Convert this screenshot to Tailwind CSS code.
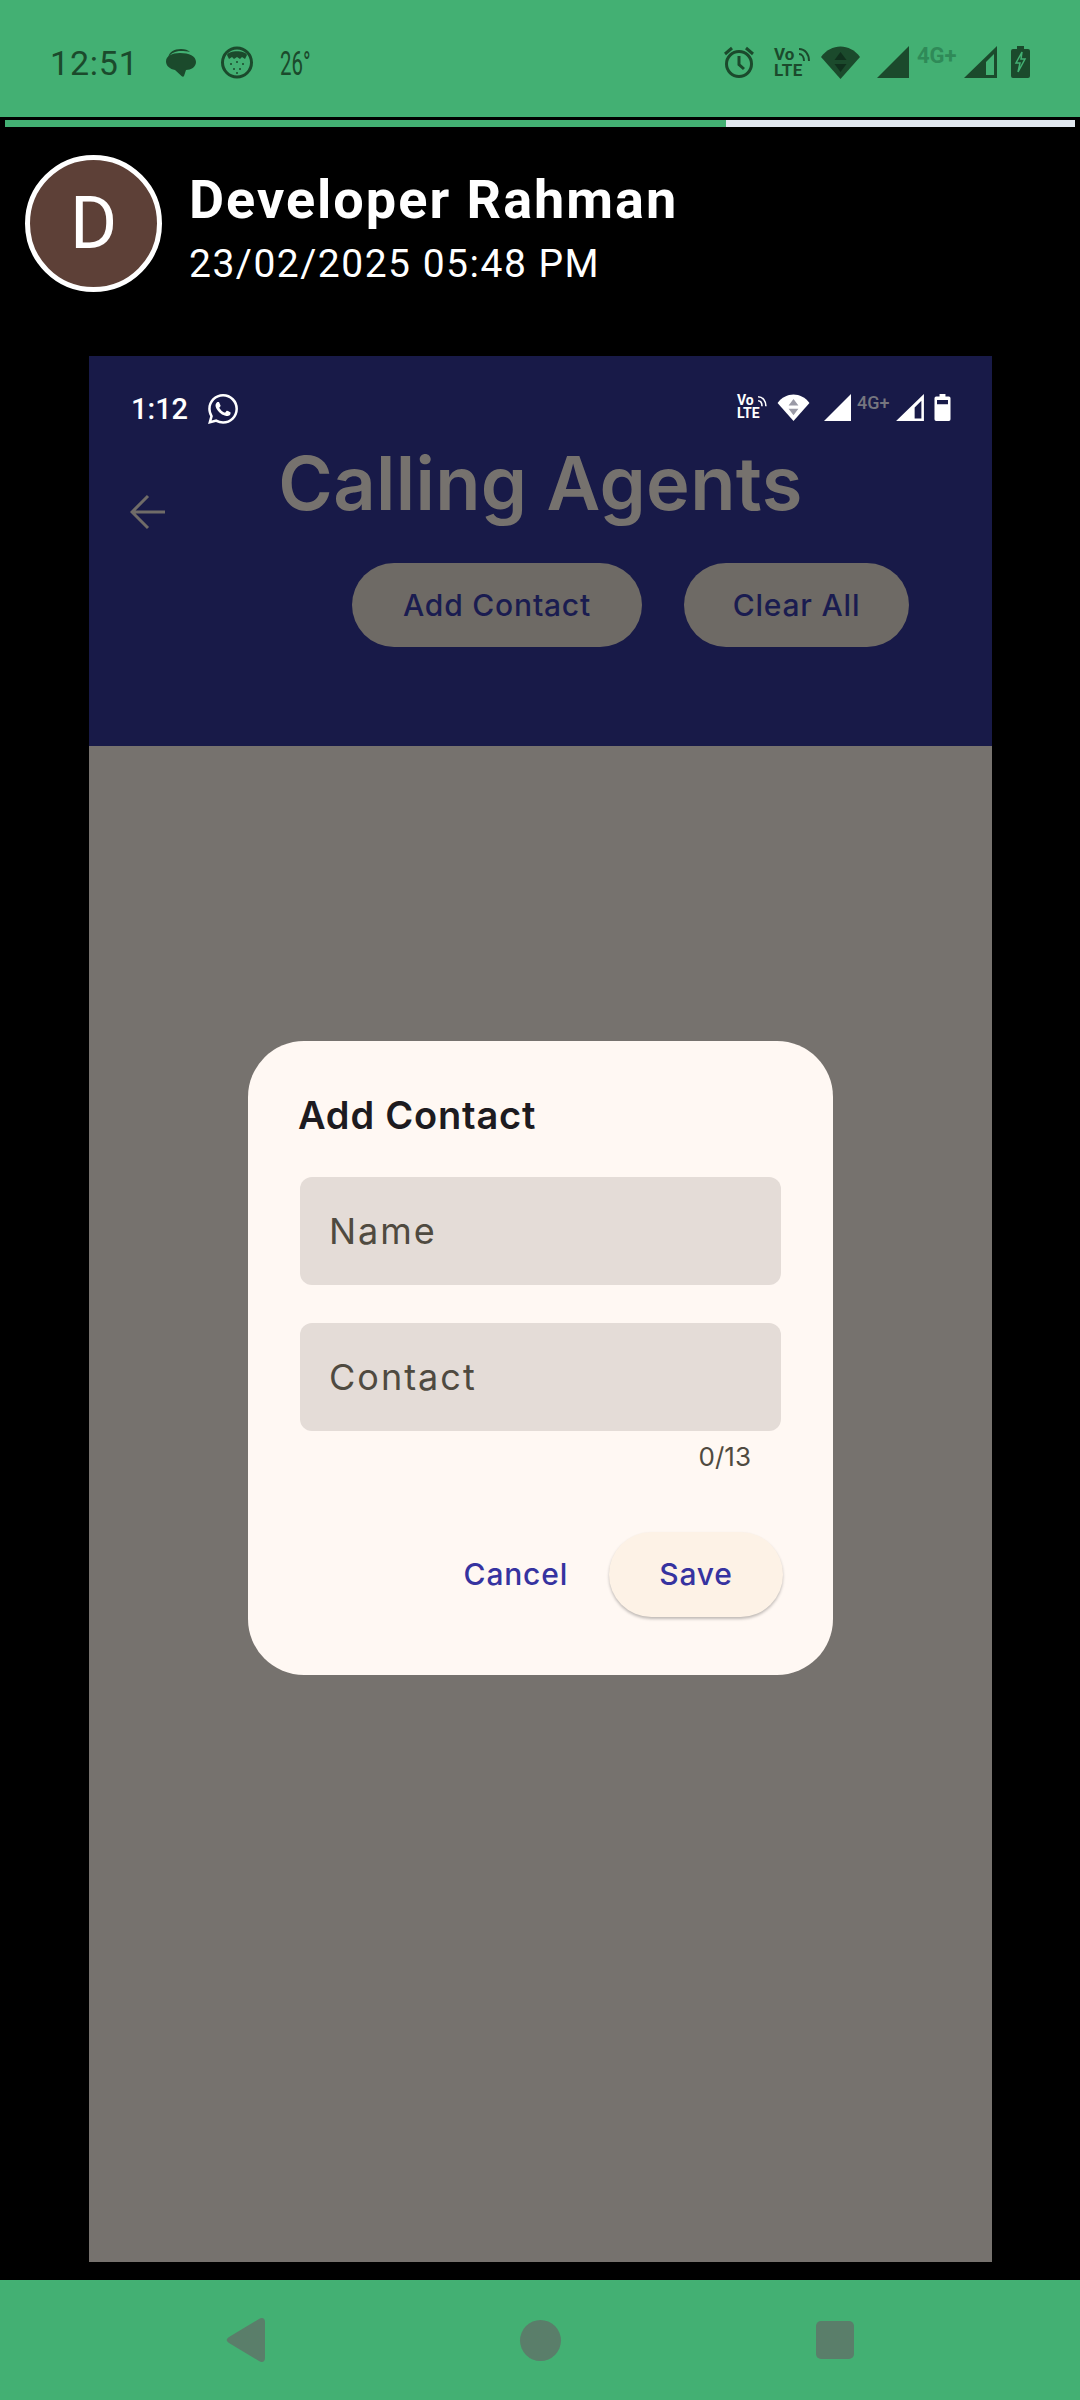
<!DOCTYPE html>
<html lang="en">
  <head>
    <meta charset="UTF-8" />
    <meta name="viewport" content="width=device-width, initial-scale=1.0" />
    <title>Calling Agents status</title>
    <script src="https://cdn.jsdelivr.net/npm/@tailwindcss/browser@4"></script>
  </head>
  <body class="w-[1080px] h-[2400px] overflow-hidden bg-black flex flex-col font-['Roboto',sans-serif]">
    <!-- phone status bar -->
    <div class="h-[117px] shrink-0 bg-[#43b073] flex items-start text-[#1b4a2c]">
      <span class="ml-[50px] mt-[41px] w-[84px] text-[34px] leading-[44px] tracking-[0.8px]">12:51</span>
      <svg class="ml-[31px] mt-[48px] w-[32px] h-[30px]" viewBox="0 0 32 30" fill="#1b4a2c">
        <path d="M3 10C4 4 9 1 16 1c4 0 7 1 9 3-3-1-6-1-9-1C10 3 6 5 3 10z" />
        <path d="M15 5c9 0 16 3 16 9 0 5-5 8-10 8l-2 6c-.5 1-1.500 1-2.500 0L10 22C5 21 1 18 1 13.500 1 8 7 5 15 5z" />
      </svg>
      <svg class="ml-[24px] mt-[46px] w-[32px] h-[33px]" viewBox="0 0 32 33">
        <circle cx="16" cy="16.500" r="14.500" fill="none" stroke="#1b4a2c" stroke-width="3" />
        <path d="M6 9c2-5 18-5 20 0l-2 4-3-2-2 2-3-2-3 2-2-2-3 2z" fill="#1b4a2c" />
        <g fill="#1b4a2c">
          <circle cx="10" cy="18" r="1" /><circle cx="16" cy="16" r="1" /><circle cx="22" cy="18" r="1" />
          <circle cx="13" cy="23" r="1" /><circle cx="19" cy="23" r="1" /><circle cx="16" cy="27" r="1" />
        </g>
      </svg>
      <span class="ml-[27px] mt-[44px] w-[36px] text-[34px] leading-[38px] scale-x-60 origin-left whitespace-nowrap">26°</span>
      <div class="ml-auto mr-[50px] mt-[46px] flex items-start">
        <svg class="w-[32px] h-[32px]" viewBox="0 0 32 32" fill="none" stroke="#1b4a2c" stroke-width="3">
          <circle cx="16" cy="18" r="12.500" />
          <path d="M16 10v8.500l5 4.500M2 8l7-6M30 8l-7-6" />
        </svg>
        <div class="ml-[19px] w-[36px] h-[32px] relative text-[#1b4a2c]">
          <span class="block text-[17px] leading-[16px] font-bold">Vo</span>
          <span class="block text-[17px] leading-[16px] font-bold tracking-[0.5px]">LTE</span>
          <svg class="absolute right-0 top-[2px] w-[12px] h-[14px]" viewBox="0 0 12 14" fill="none" stroke="#1b4a2c" stroke-width="2">
            <path d="M1 1c6 0 10 5 10 12M1 6c3 0 5 3 5 7" />
          </svg>
        </div>
        <svg class="ml-[11px] w-[39px] h-[33px]" viewBox="0 0 39 33">
          <path d="M0 11C10 -3 29 -3 39 11L19.500 33z" fill="#1b4a2c" />
          <path d="M19.500 6l-6 8h12zM13.500 18h12l-6 8z" fill="#10301d" />
        </svg>
        <svg class="ml-[17px] w-[32px] h-[32px]" viewBox="0 0 32 32"><path d="M32 0v32H0z" fill="#1b4a2c" /></svg>
        <span class="ml-[8px] w-[44px] text-[22px] leading-[20px] font-bold text-[#2f8a58]">4G+</span>
        <svg class="ml-[3px] w-[33px] h-[32px]" viewBox="0 0 33 32"><path d="M33 0v32H0zM30 8l-8 8v13h8z" fill="#1b4a2c" fill-rule="evenodd" /></svg>
        <svg class="ml-[14px] w-[19px] h-[32px]" viewBox="0 0 19 32">
          <path d="M6 0h7v3h4q2 0 2 2v25q0 2-2 2H2q-2 0-2-2V5q0-2 2-2h4z" fill="#1b4a2c" />
          <path d="M11 6L5 17h4l-2 9 7-13h-4z" fill="none" stroke="#43b073" stroke-width="1.500" />
        </svg>
      </div>
    </div>

    <!-- story progress -->
    <div class="mt-[3px] mx-[5px] h-[7px] shrink-0 flex">
      <div class="w-[721px] bg-[#43b073]"></div>
      <div class="flex-1 bg-[#e2e8f0]"></div>
    </div>

    <!-- author row -->
    <div class="mt-[28px] ml-[25px] h-[137px] shrink-0 flex items-center text-white">
      <div class="w-[137px] h-[137px] rounded-full border-[5px] border-white bg-[#5d4037] flex items-center justify-center text-[72px]">D</div>
      <div class="ml-[27px] pt-[15px] self-start flex flex-col">
        <span class="text-[54px] leading-[60px] font-bold tracking-[2px]">Developer Rahman</span>
        <span class="text-[39px] leading-[68px] tracking-[1.500px]">23/02/2025 05:48 PM</span>
      </div>
    </div>

    <!-- posted screenshot -->
    <div class="mt-[64px] ml-[89px] mr-[88px] h-[1906px] shrink-0 flex flex-col bg-[#76726e]">
      <div class="h-[390px] shrink-0 bg-[#181a48]">
        <div class="h-[82px] pt-[38px] pl-[42px] pr-[41px] flex items-start text-white">
          <span class="text-[29px] leading-[30px] font-medium">1:12</span>
          <svg class="ml-[20px] w-[30px] h-[30px]" viewBox="0 0 24 24" fill="#ffffff">
            <path d="M17.472 14.382c-.297-.149-1.758-.867-2.03-.967-.273-.099-.471-.148-.67.15-.197.297-.767.966-.94 1.164-.173.199-.347.223-.644.075-.297-.15-1.255-.463-2.39-1.475-.883-.788-1.48-1.761-1.653-2.059-.173-.297-.018-.458.13-.606.134-.133.298-.347.446-.52.149-.174.198-.298.298-.497.099-.198.05-.371-.025-.52-.075-.149-.669-1.612-.916-2.207-.242-.579-.487-.5-.669-.51-.173-.008-.371-.01-.57-.01-.198 0-.52.074-.792.372-.272.297-1.04 1.016-1.04 2.479 0 1.462 1.065 2.875 1.213 3.074.149.198 2.096 3.2 5.077 4.487.709.306 1.262.489 1.694.625.712.227 1.36.195 1.871.118.571-.085 1.758-.719 2.006-1.413.248-.694.248-1.289.173-1.413-.074-.124-.272-.198-.57-.347m-5.421 7.403h-.004a9.87 9.87 0 01-5.031-1.378l-.361-.214-3.741.982.998-3.648-.235-.374a9.86 9.86 0 01-1.51-5.26c.001-5.45 4.436-9.884 9.888-9.884 2.64 0 5.122 1.03 6.988 2.898a9.825 9.825 0 012.893 6.994c-.003 5.45-4.437 9.884-9.885 9.884m8.413-18.297A11.815 11.815 0 0012.05 0C5.495 0 .16 5.335.157 11.892c0 2.096.547 4.142 1.588 5.945L.057 24l6.305-1.654a11.882 11.882 0 005.683 1.448h.005c6.554 0 11.89-5.335 11.893-11.893a11.821 11.821 0 00-3.48-8.413z" />
          </svg>
          <div class="ml-auto flex items-start">
            <div class="w-[30px] h-[27px] relative">
              <span class="block text-[14px] leading-[13px] font-bold">Vo</span>
              <span class="block text-[14px] leading-[13px] font-bold">LTE</span>
              <svg class="absolute right-0 top-[2px] w-[10px] h-[11px]" viewBox="0 0 12 14" fill="none" stroke="#ffffff" stroke-width="2">
                <path d="M1 1c6 0 10 5 10 12M1 6c3 0 5 3 5 7" />
              </svg>
            </div>
            <svg class="ml-[10px] w-[33px] h-[27px]" viewBox="0 0 39 33">
              <path d="M0 11C10 -3 29 -3 39 11L19.500 33z" fill="#ffffff" />
              <path d="M19.500 6l-6 8h12zM13.500 18h12l-6 8z" fill="#9a9aa6" />
            </svg>
            <svg class="ml-[14px] w-[27px] h-[27px]" viewBox="0 0 32 32"><path d="M32 0v32H0z" fill="#ffffff" /></svg>
            <span class="ml-[6px] w-[37px] text-[18px] leading-[17px] font-medium text-[#76767f]">4G+</span>
            <svg class="ml-[2px] w-[28px] h-[27px]" viewBox="0 0 33 32"><path d="M33 0v32H0zM30 8l-8 8v13h8z" fill="#ffffff" fill-rule="evenodd" /></svg>
            <svg class="ml-[10px] w-[17px] h-[27px]" viewBox="0 0 19 32">
              <path d="M6 0h7v3h4q2 0 2 2v25q0 2-2 2H2q-2 0-2-2V5q0-2 2-2h4zM3 7v5h13V7z" fill="#ffffff" fill-rule="evenodd" />
            </svg>
          </div>
        </div>
        <div class="h-[125px] grid grid-cols-[1fr_auto_1fr] items-start">
          <svg class="ml-[41px] mt-[56px] w-[36px] h-[36px]" viewBox="0 0 36 36" fill="none" stroke="#706c68" stroke-width="3">
            <path d="M35 18H3M18 2L2 18l16 16" />
          </svg>
          <h1 class="text-[74px] leading-[90px] font-semibold text-[#76726e] font-['Inter',sans-serif] tracking-[0.35px]">Calling Agents</h1>
          <div></div>
        </div>
        <div class="flex justify-end gap-[42px] pr-[83px] font-['Inter',sans-serif] text-[30px] tracking-[0.8px] text-[#1a1c50] font-medium">
          <div class="w-[290px] h-[84px] rounded-full bg-[#6e6a65] flex items-center justify-center">Add Contact</div>
          <div class="w-[225px] h-[84px] rounded-full bg-[#6e6a65] flex items-center justify-center">Clear All</div>
        </div>
      </div>

      <!-- add contact dialog -->
      <div class="mt-[295px] ml-[159px] w-[585px] h-[634px] rounded-[56px] bg-[#fff8f3] font-['Inter',sans-serif] flex flex-col">
        <h2 class="mt-[50px] ml-[50px] text-[38px] leading-[48px] font-semibold text-[#1d1b20] tracking-[0.8px]">Add Contact</h2>
        <div class="mt-[38px] ml-[52px] w-[481px] h-[108px] rounded-[12px] bg-[#e4dcd7] pl-[29px] flex items-center text-[36px] text-[#4f4a40] tracking-[2px]">Name</div>
        <div class="mt-[38px] ml-[52px] w-[481px] h-[108px] rounded-[12px] bg-[#e4dcd7] pl-[29px] flex items-center text-[36px] text-[#4f4a40] tracking-[2px]">Contact</div>
        <div class="mt-[8px] mr-[82px] text-right text-[26px] leading-[36px] text-[#4f4a40]">0/13</div>
        <div class="mt-[57px] mr-[50px] flex justify-end items-center text-[#3633a0] text-[30px] tracking-[0.8px] font-medium">
          <span>Cancel</span>
          <div class="ml-[41px] w-[174px] h-[85px] rounded-full bg-[#fdf2e6] shadow-[0_2px_3px_rgba(0,0,0,0.25)] flex items-center justify-center">Save</div>
        </div>
      </div>
    </div>

    <!-- phone nav bar -->
    <div class="mt-auto h-[120px] shrink-0 bg-[#43b073] flex items-center">
      <svg class="ml-[226px] w-[40px] h-[44px]" viewBox="0 0 40 44" fill="#5a7e6a">
        <path d="M33 1c3-2 6-1 6 3v36c0 4-3 5-6 3L3 25c-3-2-3-4 0-6z" />
      </svg>
      <div class="ml-[254px] w-[41px] h-[41px] rounded-full bg-[#5a7e6a]"></div>
      <div class="ml-[255px] w-[38px] h-[38px] rounded-[5px] bg-[#5a7e6a]"></div>
    </div>
  </body>
</html>
